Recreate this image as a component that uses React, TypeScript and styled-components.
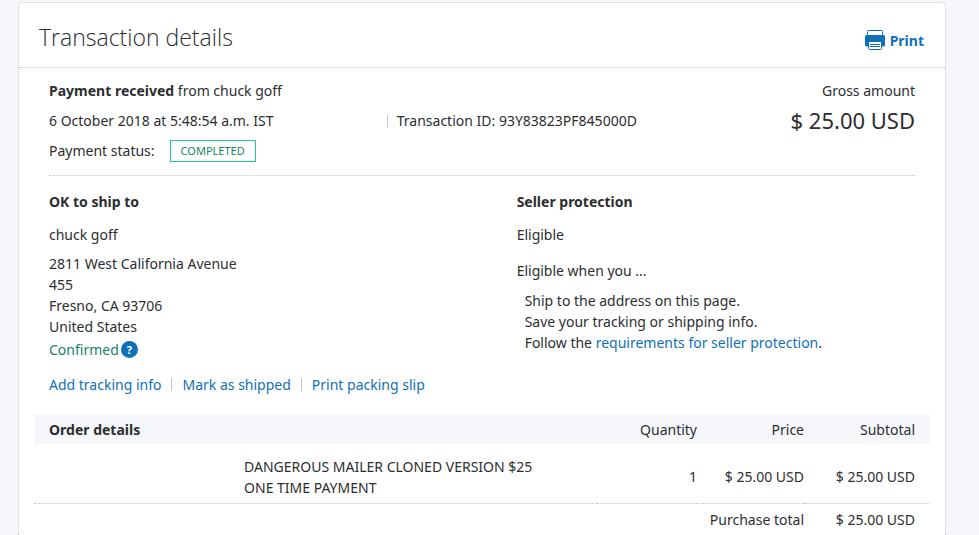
import React from 'react';
import styled, { createGlobalStyle } from 'styled-components';

const INK = '#2c2e2f';
const BLUE = '#0f70b7';
const GREEN = '#178269';
const RULE = '#c4c7cc';
const TINT = '#f5f7fb';

const GlobalStyle = createGlobalStyle`
  *, *::before, *::after { box-sizing: border-box; }
  body {
    margin: 0;
    background: ${TINT};
    color: ${INK};
    font: 14px/21px "Noto Sans", "Open Sans", sans-serif;
  }
  h1, h2, p, ul { margin: 0; padding: 0; }
`;

const Card = styled.main`
  margin: 2px 33px 0 18px;
  min-height: calc(100vh - 2px);
  background: #fff;
  border: 1px dotted ${RULE};
  border-bottom: 0;
  border-radius: 4px 4px 0 0;
`;

const Header = styled.header`
  display: flex;
  align-items: center;
  justify-content: space-between;
  padding: 18px 21px 14px 20px;
  border-bottom: 1px dotted ${RULE};
`;

const Title = styled.h1`
  font: 300 23px/32px "Open Sans", "Noto Sans", sans-serif;
`;

const PrintButton = styled.button`
  display: flex;
  align-items: center;
  gap: 5px;
  padding: 6px 0 0;
  border: 0;
  background: none;
  color: ${BLUE};
  font: inherit;
  font-weight: 700;
  cursor: pointer;
`;

const Content = styled.div`
  padding: 8px 30px 0;
`;

const Summary = styled.section`
  display: grid;
  grid-template-columns: 39% 1fr auto;
  padding-bottom: 9px;
  border-bottom: 1px dotted ${RULE};
  line-height: 30px;
`;

const Wide = styled.p`
  grid-column: span 2;
`;

const StatusLine = styled(Wide)`
  display: flex;
  align-items: center;
  gap: 15px;
`;

const TransactionId = styled.p`
  display: flex;
  align-items: center;
  gap: 9px;
`;

const Divider = styled.span`
  width: 1px;
  height: 13px;
  background: ${RULE};
`;

const Gross = styled.p`
  text-align: right;
`;

const Amount = styled(Gross)`
  font-size: 22px;
  line-height: 28px;
`;

const Badge = styled.span`
  padding: 0 10px;
  border: 1px solid #1fc797;
  color: ${GREEN};
  font-size: 11px;
  line-height: 20px;
`;

const Columns = styled.section`
  display: grid;
  grid-template-columns: 54% 1fr;
  padding-top: 15px;
`;

const Heading = styled.h2`
  font-size: 14px;
  font-weight: 700;
  line-height: 21px;
  margin-bottom: 12px;
`;

const Address = styled.p`
  margin-top: 8px;
`;

const Confirmed = styled.p`
  display: flex;
  align-items: center;
  gap: 2px;
  height: 24px;
  color: ${GREEN};
`;

const HelpButton = styled.button`
  width: 17px;
  height: 17px;
  padding: 0;
  border: 0;
  border-radius: 50%;
  background: ${BLUE};
  color: #fff;
  font: 700 11px/17px "Noto Sans", sans-serif;
  text-align: center;
  cursor: pointer;
`;

const Condition = styled.p`
  margin-top: 15px;
`;

const Steps = styled.ul`
  margin-top: 9px;
  padding-left: 8px;
  list-style: none;
`;

const Link = styled.a`
  color: ${BLUE};
  text-decoration: none;
`;

const Actions = styled.nav`
  display: flex;
  align-items: center;
  gap: 10px;
  padding-top: 13px;
`;

const Order = styled.table`
  width: calc(100% - 30px);
  margin: 19px 15px 0;
  border-collapse: collapse;
  table-layout: fixed;
`;

const Col = styled.col<{ $width?: string }>`
  width: ${(p) => p.$width ?? 'auto'};
`;

const HeadRow = styled.tr`
  background: ${TINT};
`;

const HeadCell = styled.th<{ $start?: boolean }>`
  height: 30px;
  padding: 0 0 0 15px;
  font-weight: ${(p) => (p.$start ? 700 : 400)};
  text-align: ${(p) => (p.$start ? 'left' : 'right')};
  &:last-child { padding-right: 15px; }
`;

const ItemRow = styled.tr`
  border-bottom: 1px dotted ${RULE};
`;

const Cell = styled.td`
  padding: 0;
  height: 32px;
  text-align: right;
  white-space: nowrap;
  &:last-child { padding-right: 15px; }
  ${ItemRow} & { height: 59px; padding-top: 7px; }
`;

const NameCell = styled(Cell)`
  padding-left: 4px;
  text-align: left;
  white-space: normal;
`;

const ItemName = styled.p`
  max-width: 300px;
`;

const PrinterIcon = () => (
  <svg width="20" height="20" viewBox="0 0 20 20" fill="none" aria-hidden="true">
    <path d="M2.500 5.500V1.500a1 1 0 0 1 1-1h13a1 1 0 0 1 1 1v4" stroke={BLUE} />
    <path d="M1.500 5h17A1.500 1.500 0 0 1 20 6.500V15a1.500 1.500 0 0 1-1.500 1.500h-17A1.500 1.500 0 0 1 0 15V6.500A1.500 1.500 0 0 1 1.500 5z" fill={BLUE} />
    <path d="M3.500 11.500h13v7a1 1 0 0 1-1 1h-11a1 1 0 0 1-1-1z" fill="#fff" stroke={BLUE} />
    <path d="M5 14.500h10M5 16.500h10" stroke={BLUE} />
  </svg>
);

export default function App() {
  return (
    <>
      <GlobalStyle />
      <Card>
        <Header>
          <Title>Transaction details</Title>
          <PrintButton type="button"><PrinterIcon />Print</PrintButton>
        </Header>
        <Content>
          <Summary>
            <Wide><b>Payment received</b> from chuck goff</Wide>
            <Gross>Gross amount</Gross>
            <p>6 October 2018 at 5:48:54 a.m. IST</p>
            <TransactionId><Divider />Transaction ID: 93Y83823PF845000D</TransactionId>
            <Amount>$ 25.00 USD</Amount>
            <StatusLine>Payment status:<Badge>COMPLETED</Badge></StatusLine>
          </Summary>
          <Columns>
            <div>
              <Heading>OK to ship to</Heading>
              <p>chuck goff</p>
              <Address>
                2811 West California Avenue<br />
                455<br />
                Fresno, CA 93706<br />
                United States
              </Address>
              <Confirmed>
                Confirmed
                <HelpButton type="button" aria-label="About confirmed addresses">?</HelpButton>
              </Confirmed>
            </div>
            <div>
              <Heading>Seller protection</Heading>
              <p>Eligible</p>
              <Condition>Eligible when you ...</Condition>
              <Steps>
                <li>Ship to the address on this page.</li>
                <li>Save your tracking or shipping info.</li>
                <li>Follow the <Link href="#requirements">requirements for seller protection</Link>.</li>
              </Steps>
            </div>
          </Columns>
          <Actions>
            <Link href="#tracking">Add tracking info</Link>
            <Divider />
            <Link href="#shipped">Mark as shipped</Link>
            <Divider />
            <Link href="#slip">Print packing slip</Link>
          </Actions>
        </Content>
        <Order>
          <colgroup>
            <Col $width="23%" />
            <Col />
            <Col $width="100px" />
            <Col $width="107px" />
            <Col $width="126px" />
          </colgroup>
          <thead>
            <HeadRow>
              <HeadCell $start colSpan={2}>Order details</HeadCell>
              <HeadCell>Quantity</HeadCell>
              <HeadCell>Price</HeadCell>
              <HeadCell>Subtotal</HeadCell>
            </HeadRow>
          </thead>
          <tbody>
            <ItemRow>
              <Cell />
              <NameCell><ItemName>DANGEROUS MAILER CLONED VERSION $25 ONE TIME PAYMENT</ItemName></NameCell>
              <Cell>1</Cell>
              <Cell>$ 25.00 USD</Cell>
              <Cell>$ 25.00 USD</Cell>
            </ItemRow>
            <tr>
              <Cell colSpan={4}>Purchase total</Cell>
              <Cell>$ 25.00 USD</Cell>
            </tr>
          </tbody>
        </Order>
      </Card>
    </>
  );
}
